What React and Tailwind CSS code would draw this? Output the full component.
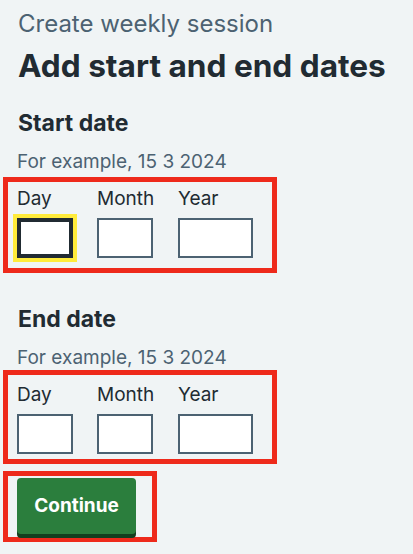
const DateInputs = ({focusFirst}) => {
  const fields = [
    {label: 'Day', width: 'w-[56px]', gap: 'mr-[24px]'},
    {label: 'Month', width: 'w-[56px]', gap: 'mr-[25px]'},
    {label: 'Year', width: 'w-[75px]', gap: ''},
  ];

  return (
    <div className="flex">
      {fields.map((f, i) => (
        <div key={f.label} className={`${f.width} ${f.gap} shrink-0`}>
          <label className="block whitespace-nowrap text-[19px] leading-[24px] text-[#212b32]">
            {f.label}
          </label>
          <input
            type="text"
            inputMode="numeric"
            className={
              i === 0 && focusFirst
                ? 'mt-[7.5px] block h-[40px] w-full bg-white border-2 border-[#212b32] shadow-[inset_0_0_0_2px_#212b32] outline-4 outline-solid outline-[#ffeb3b]'
                : 'mt-[7.5px] block h-[40px] w-full bg-white border-2 border-[#4c6272] outline-none'
            }
          />
        </div>
      ))}
    </div>
  );
};

export default function App() {
  return (
    <div className="min-h-[554px] w-[413px] bg-[#f0f4f5] pl-[3px] pt-[8px] font-['Inter','Liberation_Sans',sans-serif] text-[#212b32]">
      <p className="pl-[15px] text-[24px] leading-[32px] text-[#4c6272]">Create weekly session</p>
      <h1 className="mt-[7.5px] pl-[15px] text-[31.6px] font-bold leading-[36px]">Add start and end dates</h1>

      {/* Start date */}
      <h2 className="mt-[25px] pl-[15px] text-[23px] font-bold leading-[28px]">Start date</h2>
      <p className="mt-[13px] pl-[14px] text-[19px] leading-[24px] text-[#4c6272]">For example, 15 3 2024</p>
      <div className="mt-[3px] w-[274px] border-[5px] border-[#ee2a1b] pl-[9px] pt-[5px] pb-[10px]">
        <DateInputs focusFirst />
      </div>

      {/* End date */}
      <h2 className="mt-[31.5px] pl-[15px] text-[23px] font-bold leading-[28px]">End date</h2>
      <p className="mt-[13.5px] pl-[14px] text-[19px] leading-[24px] text-[#4c6272]">For example, 15 3 2024</p>
      <div className="w-[274px] border-[5px] border-[#ee2a1b] pl-[9px] pt-[7.5px] pb-[5px]">
        <DateInputs />
      </div>

      <div className="mt-[7px] w-[154px] border-[5px] border-[#ee2a1b] pl-[9px] pt-[2px] pb-[3px]">
        <button
          type="button"
          className="h-[56px] w-[119px] rounded-[4px] bg-[#2b7e3d] text-[19px] font-bold text-white shadow-[0_4px_0_#143f1f]">
          Continue
        </button>
      </div>
    </div>
  );
}
